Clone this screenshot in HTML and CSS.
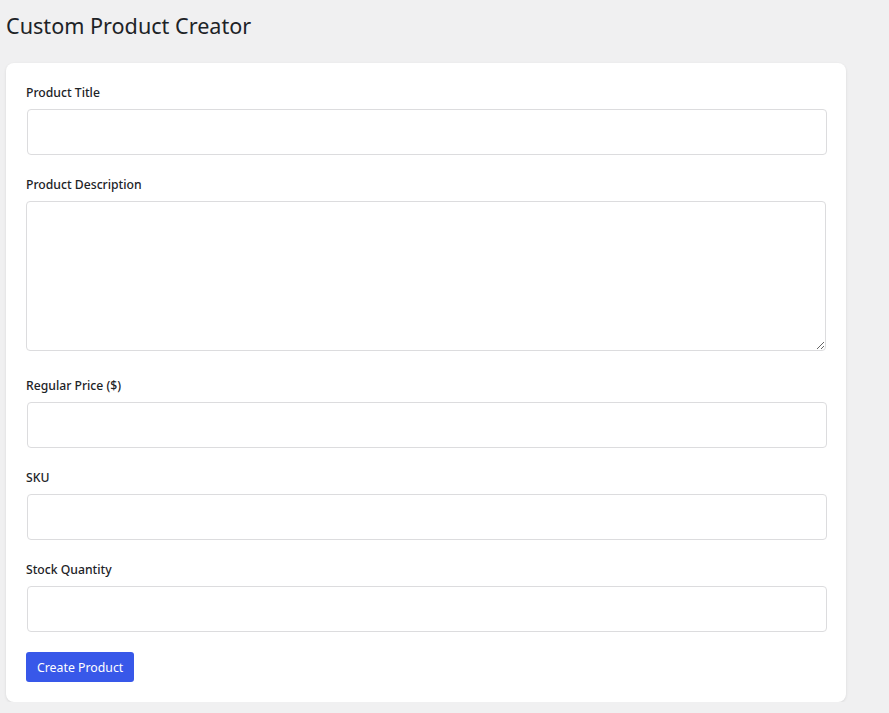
FILE: index.html
```html
<!DOCTYPE html>
<html lang="en">
<head>
<meta charset="utf-8">
<title>Custom Product Creator</title>
<link rel="stylesheet" href="styles.css">
</head>
<body>
<div class="wrap">
  <h1 class="page-title">Custom Product Creator</h1>
  <form class="card">
    <div class="field">
      <label class="label" for="title">Product Title</label>
      <input class="input" id="title" type="text">
    </div>
    <div class="field">
      <label class="label" for="desc">Product Description</label>
      <textarea class="textarea" id="desc"></textarea>
    </div>
    <div class="field">
      <label class="label" for="price">Regular Price ($)</label>
      <input class="input" id="price" type="text">
    </div>
    <div class="field">
      <label class="label" for="sku">SKU</label>
      <input class="input" id="sku" type="text">
    </div>
    <div class="field">
      <label class="label" for="qty">Stock Quantity</label>
      <input class="input" id="qty" type="text">
    </div>
    <button class="button" type="button">Create Product</button>
  </form>
</div>
</body>
</html>
```
FILE: styles.css
```css
html, body {
  margin: 0;
  padding: 0;
  background: #f0f0f1;
}
body {
  font-family: "Noto Sans", "Open Sans", sans-serif;
  color: #1d2327;
}
.wrap {
  padding: 0 0 0 6px;
}
.page-title {
  margin: 0;
  padding: 11px 0 2px;
  font-size: 21.6px;
  font-weight: 400;
  line-height: 30px;
  color: #1d2327;
}
.card {
  margin-top: 20px;
  width: 840px;
  box-sizing: border-box;
  padding: 20px;
  background: #fff;
  border-radius: 8px;
  box-shadow: 0 1px 3px rgba(0, 0, 0, 0.1);
}
.field {
  display: flex;
  flex-direction: column;
  gap: 7px;
  margin-bottom: 20px;
}
.label {
  display: block;
  padding-top: 1px;
  font-size: 12.2px;
  font-weight: 500;
  line-height: 18px;
}
.input, .textarea {
  display: block;
  box-sizing: border-box;
  width: 100%;
  border: 1px solid #dcdcde;
  border-radius: 4px;
  background: #fff;
  font: inherit;
  font-size: 14px;
}
.input {
  height: 46px;
  margin: 0 1px;
}
.textarea {
  height: 150px;
  margin: 0 0 5px;
  resize: vertical;
}
.button {
  display: block;
  height: 30px;
  padding: 1px 11px 0;
  border: 0;
  border-radius: 3px;
  background: #3858e9;
  color: #fff;
  font-family: inherit;
  font-size: 12.3px;
  line-height: 29px;
}
```
